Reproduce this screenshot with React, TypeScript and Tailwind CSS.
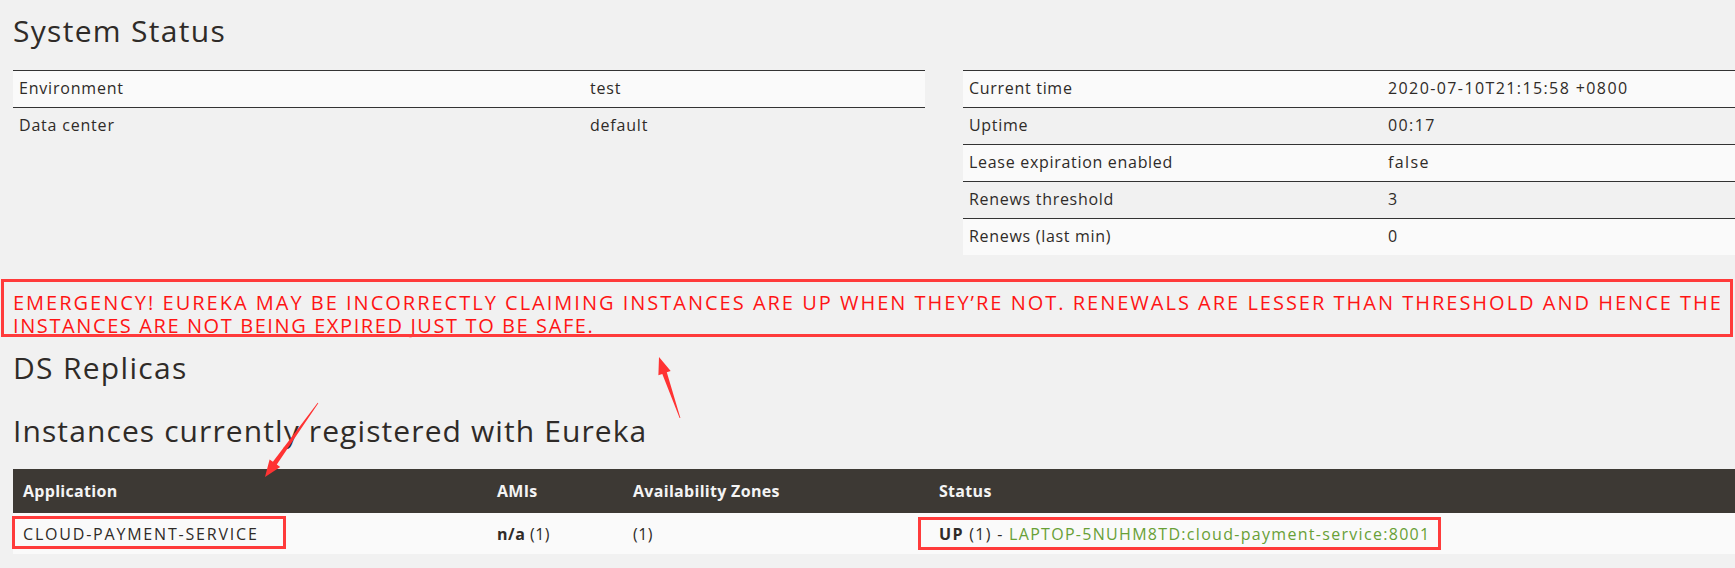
import React from "react";

function arrowPoints(x1: number, y1: number, x2: number, y2: number) {
  const dx = x2 - x1;
  const dy = y2 - y1;
  const len = Math.sqrt(dx * dx + dy * dy);
  const ux = dx / len;
  const uy = dy / len;
  const px = -uy;
  const py = ux;
  const headLen = 17;
  const headW = 6.5;
  const neckW = 2.4;
  const tailW = 0.4;
  const bx = x2 - ux * headLen;
  const by = y2 - uy * headLen;
  const pts = [
    [x1 + px * tailW, y1 + py * tailW],
    [bx + px * neckW, by + py * neckW],
    [bx + px * headW, by + py * headW],
    [x2, y2],
    [bx - px * headW, by - py * headW],
    [bx - px * neckW, by - py * neckW],
    [x1 - px * tailW, y1 - py * tailW],
  ];
  return pts.map((p) => `${p[0].toFixed(1)},${p[1].toFixed(1)}`).join(" ");
}

const leftRows = [
  ["Environment", "test"],
  ["Data center", "default"],
];

const rightRows = [
  ["Current time", "2020-07-10T21:15:58 +0800"],
  ["Uptime", "00:17"],
  ["Lease expiration enabled", "false"],
  ["Renews threshold", "3"],
  ["Renews (last min)", "0"],
];

export default function App() {
  return (
    <div
      className="relative w-[1735px] h-[568px] overflow-hidden bg-[#f1f1f1] text-[#2f2b28]"
      style={{ fontFamily: '"Open Sans", "Noto Sans", sans-serif' }}
    >
      <div className="pl-[13px]">
        <h1 className="pt-[14px] text-[30px] leading-[33px] font-normal tracking-[1.3px]">System Status</h1>

        <div className="mt-[23px] flex gap-[38px]">
          <div className="w-[912px] shrink-0 text-[16px] tracking-[0.8px]">
            {leftRows.map((r, i) => (
              <div
                key={r[0]}
                className={`flex h-[37px] border-t border-[#333] pt-[6px] leading-[22px] ${i % 2 === 0 ? "bg-[#fafafa]" : ""}`}
              >
                <div className="w-[577px] shrink-0 pl-[6px]">{r[0]}</div>
                <div className="flex-1">{r[1]}</div>
              </div>
            ))}
          </div>
          <div className="w-[900px] shrink-0 text-[16px] tracking-[0.7px]">
            {rightRows.map((r, i) => (
              <div
                key={r[0]}
                className={`flex h-[37px] pt-[6px] leading-[22px] border-t border-[#333] ${i % 2 === 0 ? "bg-[#fafafa]" : "bg-[#f1f1f1]"}`}
              >
                <div className="w-[425px] shrink-0 pl-[6px]">{r[0]}</div>
                <div className="flex-1 tracking-[1.4px]">{r[1]}</div>
              </div>
            ))}
          </div>
        </div>
      </div>

      <div className="relative mt-[36px] pl-[13px] whitespace-nowrap text-[20px] leading-[23px] font-medium text-[#ff1414]">
        <span className="tracking-[2px]">
          EMERGENCY! EUREKA MAY BE INCORRECTLY CLAIMING INSTANCES ARE UP WHEN THEY’RE NOT. RENEWALS ARE LESSER THAN
          THRESHOLD AND HENCE THE
        </span>
        <br />
        <span className="tracking-[1.6px]">INSTANCES ARE NOT BEING EXPIRED JUST TO BE SAFE.</span>
        <div className="absolute left-[1px] top-[-12px] w-[1732px] h-[58px] border-[3px] border-[#ff3b3b]" />
      </div>

      <div className="pl-[13px]">
        <h2 className="mt-[14px] text-[30px] leading-[33px] font-normal tracking-[1.3px]">DS Replicas</h2>
        <h2 className="mt-[30px] text-[30px] leading-[33px] font-normal tracking-[1.1px]">
          Instances currently registered with Eureka
        </h2>

        <div className="mt-[22px] w-[1760px] text-[16px]">
          <div className="flex h-[44px] items-center bg-[#3d3934] font-bold tracking-[0.3px] text-[#f4f4f4]">
            <div className="w-[474px] shrink-0 pl-[10px]">Application</div>
            <div className="w-[136px] shrink-0 pl-[10px]">AMIs</div>
            <div className="w-[306px] shrink-0 pl-[10px]">Availability Zones</div>
            <div className="flex-1 pl-[10px]">Status</div>
          </div>
          <div className="flex h-[41px] items-center bg-[#fafafa]">
            <div className="relative w-[474px] shrink-0 self-stretch flex items-center pl-[10px] tracking-[1.8px]">
              CLOUD-PAYMENT-SERVICE
              <div className="absolute left-[-1px] top-[3px] w-[274px] h-[33px] border-[3px] border-[#ff3b3b]" />
            </div>
            <div className="w-[136px] shrink-0 pl-[10px] tracking-[0.5px]">
              <span className="font-bold">n/a</span> (1)
            </div>
            <div className="w-[306px] shrink-0 pl-[10px] tracking-[0.5px]">(1)</div>
            <div className="relative flex-1 self-stretch flex items-center pl-[10px] tracking-[1.3px]">
              <span>
                <span className="font-bold">UP</span> (1) -{" "}
                <span className="text-[#68a036]">LAPTOP-5NUHM8TD:cloud-payment-service:8001</span>
              </span>
              <div className="absolute left-[-11px] top-[4px] w-[523px] h-[33px] border-[3px] border-[#ff3b3b]" />
            </div>
          </div>
        </div>
      </div>

      <svg className="pointer-events-none absolute left-0 top-0" width="1735" height="568">
        <polygon points={arrowPoints(318, 403, 265, 477)} fill="#ff3333" />
        <polygon points={arrowPoints(680, 418, 659, 357)} fill="#ff3333" />
      </svg>
    </div>
  );
}
